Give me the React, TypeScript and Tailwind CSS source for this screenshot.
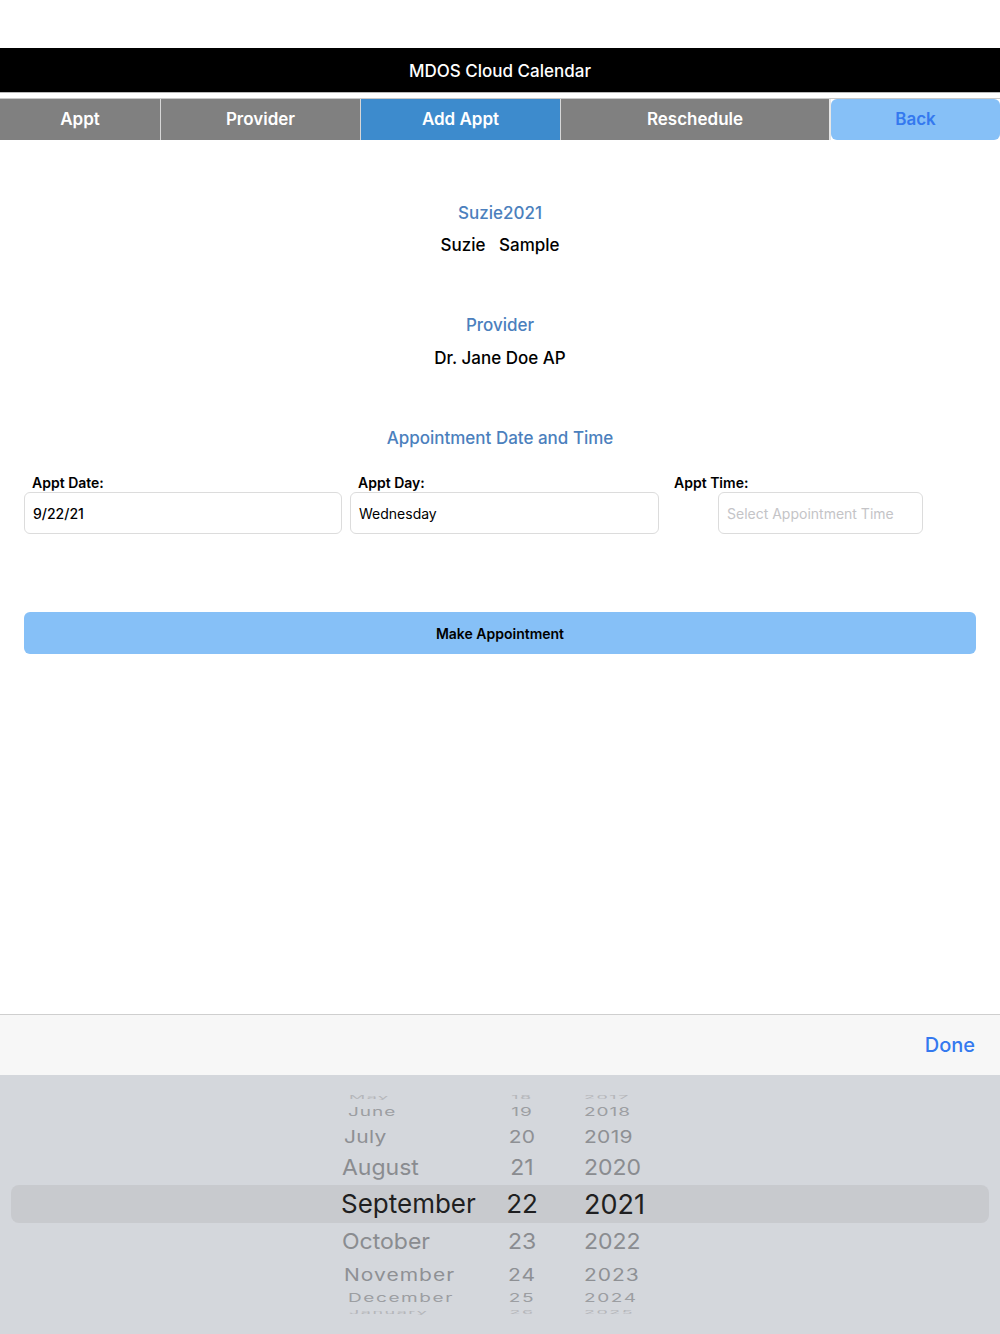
import React from "react";

type Row = {
  m: string;
  d: string;
  y: string;
  h: number;
  fs: number;
  sy: number;
  color: string;
  ls: number;
  sel?: boolean;
  mOff: number;
};

const rows: Row[] = [
  { m: "May", d: "18", y: "2017", h: 12, fs: 18, sy: 0.25, ls: 1.5, color: "#b4b6ba", mOff: 8 },
  { m: "June", d: "19", y: "2018", h: 19, fs: 19, sy: 0.6, ls: 1, color: "#9c9ea2", mOff: 7 },
  { m: "July", d: "20", y: "2019", h: 28, fs: 21, sy: 0.82, ls: 0.3, color: "#8e9094", mOff: 3 },
  { m: "August", d: "21", y: "2020", h: 35, fs: 23, sy: 0.96, ls: 0, color: "#8a8c90", mOff: 1 },
  { m: "September", d: "22", y: "2021", h: 38, fs: 26, sy: 1, ls: 0, color: "#1f1f21", sel: true, mOff: 0 },
  { m: "October", d: "23", y: "2022", h: 37, fs: 23, sy: 0.96, ls: 0, color: "#8a8c90", mOff: 1 },
  { m: "November", d: "24", y: "2023", h: 30, fs: 21, sy: 0.8, ls: 1, color: "#8e9094", mOff: 3 },
  { m: "December", d: "25", y: "2024", h: 17, fs: 19, sy: 0.6, ls: 1.6, color: "#9c9ea2", mOff: 7 },
  { m: "January", d: "26", y: "2025", h: 10, fs: 18, sy: 0.25, ls: 1.5, color: "#b4b6ba", mOff: 8 },
];

export default function App() {
  const font = { fontFamily: "Inter, 'Liberation Sans', sans-serif" };
  return (
    <div className="w-[1000px] h-[1334px] flex flex-col bg-white overflow-hidden" style={font}>
      <div className="h-[48px] shrink-0" />
      <div className="h-[44px] shrink-0 bg-black flex items-center justify-center pt-[3px] text-white text-[17px] font-medium">
        MDOS Cloud Calendar
      </div>
      <div className="h-px bg-[#b8b8b8] shrink-0" />
      <div className="h-[5px] shrink-0" />
      <div className="h-[42px] shrink-0 flex border-t border-[#c8c8c8] text-[17px] font-semibold text-white">
        <div className="w-[160px] bg-[#808080] flex items-center justify-center pt-px">Appt</div>
        <div className="w-px bg-[#d6d6d6]" />
        <div className="w-[199px] bg-[#808080] flex items-center justify-center pt-px">Provider</div>
        <div className="w-px bg-[#d6d6d6]" />
        <div className="w-[199px] bg-[#3d8bcd] flex items-center justify-center pt-px">Add Appt</div>
        <div className="w-px bg-[#d6d6d6]" />
        <div className="w-[268px] bg-[#808080] flex items-center justify-center pt-px">Reschedule</div>
        <div className="w-[2px] bg-[#e6e6e6]" />
        <div className="flex-1 bg-[#86c0f7] rounded-md flex items-center justify-center pt-px text-[#3479ef]">Back</div>
      </div>

      <div className="flex flex-col items-center text-[17px] font-medium leading-[24px]">
        <div className="mt-[61px] text-[#4b80bd]">Suzie2021</div>
        <div className="mt-[8px] text-black whitespace-pre">Suzie   Sample</div>
        <div className="mt-[56px] text-[#4b80bd]">Provider</div>
        <div className="mt-[9px] text-black">Dr. Jane Doe AP</div>
        <div className="mt-[56px] text-[#4b80bd]">Appointment Date and Time</div>
      </div>

      <div className="mt-[23px] flex px-[24px] text-[14px]">
        <div className="w-[318px] flex flex-col">
          <div className="h-[19px] leading-[19px] pl-[8px] font-semibold text-black">Appt Date:</div>
          <div className="h-[42px] border border-[#dcdcdc] rounded-md flex items-center px-[8px] font-medium text-black">
            9/22/21
          </div>
        </div>
        <div className="w-[309px] ml-[8px] flex flex-col">
          <div className="h-[19px] leading-[19px] pl-[8px] font-semibold text-black">Appt Day:</div>
          <div className="h-[42px] border border-[#dcdcdc] rounded-md flex items-center px-[8px] text-black">
            Wednesday
          </div>
        </div>
        <div className="ml-[15px] flex flex-col">
          <div className="h-[19px] leading-[19px] font-semibold text-black">Appt Time:</div>
          <div className="ml-[44px] w-[205px] h-[42px] border border-[#dcdcdc] rounded-md flex items-center px-[8px] text-[#c4c4c7]">
            Select Appointment Time
          </div>
        </div>
      </div>

      <div className="mt-[78px] mx-[24px] h-[42px] bg-[#86c0f7] rounded-md flex items-center justify-center text-[14px] font-semibold text-black">
        Make Appointment
      </div>

      <div className="mt-auto shrink-0 flex flex-col">
        <div className="h-px bg-[#cfcfcf]" />
        <div className="h-[60px] bg-[#f7f7f7] flex items-center justify-end pr-[25px]">
          <span className="text-[20px] font-medium text-[#3479ef]">Done</span>
        </div>
        <div className="h-[259px] bg-[#d4d7dc] flex flex-col pt-[16px]">
          {rows.map((r) => (
            <div
              key={r.m}
              className={`mx-[11px] flex items-center ${r.sel ? "bg-[#c8cace] rounded-lg" : ""}`}
              style={{ height: r.h }}
            >
              <div
                className="flex items-center w-full"
                style={{
                  transform: `scaleY(${r.sy})`,
                  color: r.color,
                  fontSize: r.fs,
                  lineHeight: 1,
                  letterSpacing: r.ls,
                }}
              >
                <span className="w-[150px] whitespace-nowrap" style={{ marginLeft: 330 + r.mOff }}>
                  {r.m}
                </span>
                <span className="w-[66px] text-center" style={{ marginLeft: -r.mOff - 2 }}>
                  {r.d}
                </span>
                <span className="ml-[29px]" style={r.sel ? { fontSize: 27 } : undefined}>
                  {r.y}
                </span>
              </div>
            </div>
          ))}
        </div>
      </div>
    </div>
  );
}
